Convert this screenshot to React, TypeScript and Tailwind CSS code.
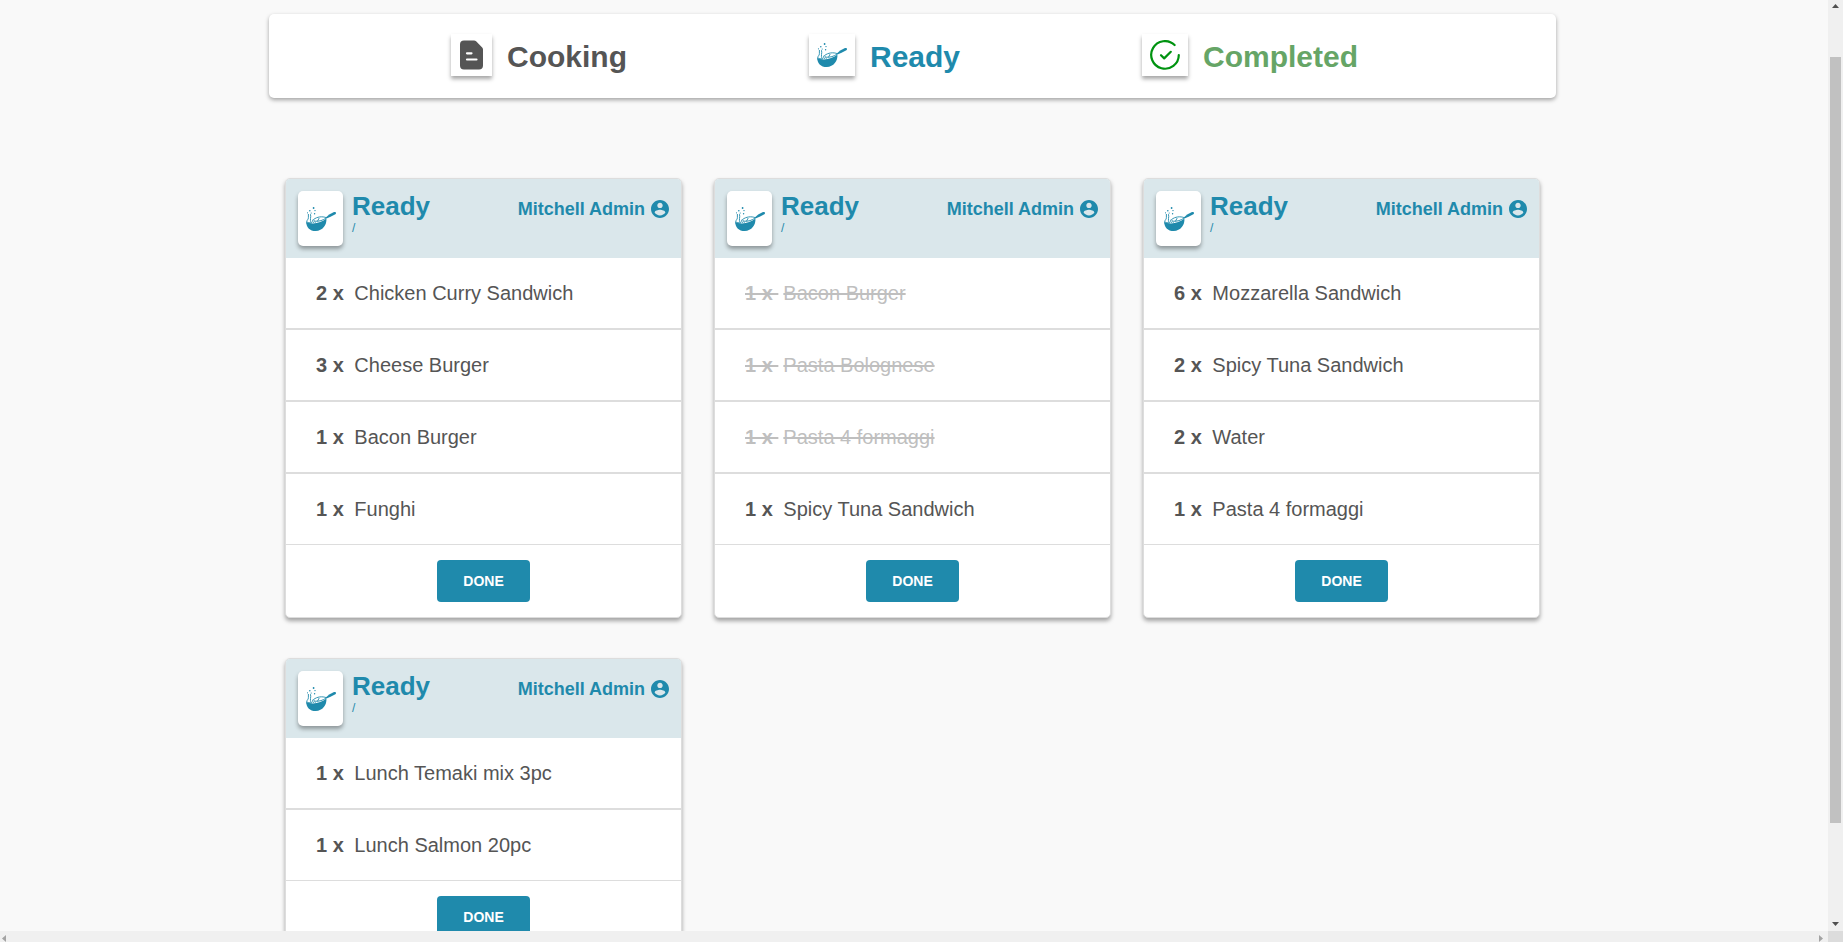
import type { ReactNode } from "react";

type Line = { qty: number; name: string; done?: boolean };
type Order = { id: number; user: string; lines: Line[] };

const orders: Order[] = [
  {
    id: 1,
    user: "Mitchell Admin",
    lines: [
      { qty: 2, name: "Chicken Curry Sandwich" },
      { qty: 3, name: "Cheese Burger" },
      { qty: 1, name: "Bacon Burger" },
      { qty: 1, name: "Funghi" },
    ],
  },
  {
    id: 2,
    user: "Mitchell Admin",
    lines: [
      { qty: 1, name: "Bacon Burger", done: true },
      { qty: 1, name: "Pasta Bolognese", done: true },
      { qty: 1, name: "Pasta 4 formaggi", done: true },
      { qty: 1, name: "Spicy Tuna Sandwich" },
    ],
  },
  {
    id: 3,
    user: "Mitchell Admin",
    lines: [
      { qty: 6, name: "Mozzarella Sandwich" },
      { qty: 2, name: "Spicy Tuna Sandwich" },
      { qty: 2, name: "Water" },
      { qty: 1, name: "Pasta 4 formaggi" },
    ],
  },
  {
    id: 4,
    user: "Mitchell Admin",
    lines: [
      { qty: 1, name: "Lunch Temaki mix 3pc" },
      { qty: 1, name: "Lunch Salmon 20pc" },
    ],
  },
];

function PanIcon() {
  return (
    <svg viewBox="0 0 30 30" className="size-[30px]" fill="#1f8aac" aria-hidden="true">
      <path d="M0.2 17.4C3.6 20.8 15 19.8 20.4 14.6C21 21 16.6 27 9.8 27C3.8 27 0 23 0.2 17.4Z" />
      <path d="M19.8 13.6L23.2 10.6L28 8.1C29.6 7.4 30.8 9.2 29.4 10.2L24.6 12.8L20.4 14.4Z" />
      <path
        d="M0.8 18C0.8 15 2.4 16.4 2.4 13.4V10.4M5 18.4C3.4 16 5.4 13 4.6 10.6M7.4 18.6C5.6 16.4 6.8 14.4 8.4 16.6L9.2 18.4M1.2 19.4C3 17 4.4 20 6 18.6M8 15.2C11 12.8 16 12 20.2 13.6M9.6 17.2C13 17.6 17 16.4 20.2 14M13 14.4L11.6 17"
        fill="none"
        stroke="#1f8aac"
        strokeWidth="0.9"
        strokeLinecap="round"
      />
      <circle cx="7.6" cy="4" r="0.9" />
      <circle cx="3.8" cy="6.8" r="0.8" />
      <circle cx="9" cy="6.6" r="0.7" />
      <circle cx="5.2" cy="9" r="0.6" />
      <circle cx="8.6" cy="9.8" r="0.7" />
      <circle cx="1.5" cy="8.8" r="0.6" />
    </svg>
  );
}

function TicketIcon() {
  return (
    <svg viewBox="0 0 24 30" className="h-[30px] w-[25px]" fill="none" aria-hidden="true">
      <path
        d="M4.5 0.5H14.5C15.4 0.5 16 0.7 16.6 1.3L22.7 7.4C23.3 8 23.5 8.6 23.5 9.5V25.5C23.5 28.1 22.1 29.5 19.5 29.5H4.5C1.9 29.5 0.5 28.1 0.5 25.5V4.5C0.5 1.9 1.9 0.5 4.5 0.5Z"
        fill="#555"
      />
      <path d="M7.5 13.3H12M7.5 19.5H17" stroke="#fff" strokeWidth="2.2" strokeLinecap="round" />
    </svg>
  );
}

function CompletedIcon() {
  return (
    <svg
      viewBox="0 0 30 30"
      className="size-[30px]"
      fill="none"
      stroke="#009310"
      strokeWidth="2.2"
      strokeLinecap="round"
      strokeLinejoin="round"
      aria-hidden="true"
    >
      <path d="M24.6 5A13.8 13.8 0 1 0 28.8 15" />
      <path d="M11 15.2L14.2 18.4L20.8 11.8" />
    </svg>
  );
}

function UserIcon() {
  return (
    <svg viewBox="2 2 20 20" className="size-[18px]" fill="#1f8aac" aria-hidden="true">
      <path d="M12 2C6.48 2 2 6.48 2 12s4.48 10 10 10 10-4.48 10-10S17.52 2 12 2zm0 3c1.66 0 3 1.34 3 3s-1.34 3-3 3-3-1.34-3-3 1.34-3 3-3zm0 14.2c-2.5 0-4.71-1.28-6-3.22.03-1.99 4-3.08 6-3.08 1.99 0 5.97 1.09 6 3.08-1.29 1.94-3.5 3.22-6 3.22z" />
    </svg>
  );
}

function StageTab({ icon, label, color }: { icon: ReactNode; label: string; color: string }) {
  return (
    <button type="button" className="flex items-start gap-[15px]">
      <span className="flex h-[42px] items-center bg-white px-2 shadow-[0_3px_4px_rgba(0,0,0,0.35)]">{icon}</span>
      <span className={`text-[30px] leading-[46px] font-bold ${color}`}>{label}</span>
    </button>
  );
}

function OrderCard({ order }: { order: Order }) {
  return (
    <article className="overflow-hidden rounded-[5px] border border-[#ddd] bg-white shadow-[0_3px_4px_rgba(0,0,0,0.35)]">
      <header className="flex items-start gap-[9px] bg-[#dae7eb] p-3 text-[#1f8aac]">
        <span className="flex h-[55px] w-[45px] shrink-0 items-center justify-center rounded-[5px] bg-white shadow-[0_3px_4px_rgba(0,0,0,0.35)]">
          <PanIcon />
        </span>
        <div className="flex-1">
          <h2 className="text-[26px] leading-[30px] font-bold">Ready</h2>
          <p className="text-xs leading-[14px]">/</p>
        </div>
        <p className="flex items-center gap-[6px] pt-2 text-lg leading-5 font-bold">
          {order.user}
          <UserIcon />
        </p>
      </header>
      <ul className="divide-y-2 divide-[#ddd]">
        {order.lines.map((line) => (
          <li key={line.name}>
            <button
              type="button"
              className={`flex w-full items-center gap-[5px] px-[30px] py-5 text-xl leading-[30px] whitespace-pre ${
                line.done ? "text-[#bfbfbf]" : "text-[#555]"
              }`}
            >
              <span className={line.done ? "font-bold line-through" : "font-bold"}>{`${line.qty} x `}</span>
              <span className={line.done ? "line-through" : ""}>{line.name}</span>
            </button>
          </li>
        ))}
      </ul>
      <footer className="flex justify-center border-t border-[#ddd] py-[15px]">
        <button type="button" className="rounded bg-[#1f8aac] px-[26px] py-[11px] text-sm leading-5 font-bold text-white">
          DONE
        </button>
      </footer>
    </article>
  );
}

function VerticalScrollbar() {
  return (
    <div className="flex w-[15px] shrink-0 flex-col items-center bg-[#f0f0f0] pt-1 pb-[5px]" aria-hidden="true">
      <svg viewBox="0 0 7 4" className="h-1 w-[7px]" fill="#505050">
        <path d="M3.5 0L7 4H0Z" />
      </svg>
      <div className="flex w-full flex-1 flex-col items-center pt-[49px] pb-[99px]">
        <div className="w-[11px] flex-1 bg-[#c1c1c1]" />
      </div>
      <svg viewBox="0 0 7 4" className="h-1 w-[7px]" fill="#505050">
        <path d="M3.5 4L0 0H7Z" />
      </svg>
    </div>
  );
}

function HorizontalScrollbar() {
  return (
    <div className="flex h-[11px] shrink-0 bg-[#f0f0f0]" aria-hidden="true">
      <div className="flex flex-1 items-end justify-between pr-[5px] pl-[2px]">
        <svg viewBox="0 0 4 7" className="h-[7px] w-1" fill="#a3a3a3">
          <path d="M0 3.5L4 0V7Z" />
        </svg>
        <svg viewBox="0 0 4 7" className="h-[7px] w-1" fill="#a3a3a3">
          <path d="M4 3.5L0 0V7Z" />
        </svg>
      </div>
      <div className="w-[15px] bg-[#dcdcdc]" />
    </div>
  );
}

export default function App() {
  return (
    <div className="flex h-screen flex-col overflow-hidden bg-[#f9f9f9] font-['Liberation_Sans',Arial,sans-serif] text-[#555]">
      <div className="flex min-h-0 flex-1">
        <main className="min-w-0 flex-1 overflow-hidden pt-[14px] pr-[3px]">
          <div className="mx-auto max-w-[1287px]">
            <nav className="flex items-center justify-evenly rounded-[5px] bg-white pt-5 pr-4 pb-[18px] shadow-[0_2px_4px_rgba(0,0,0,0.35)]">
              <StageTab icon={<TicketIcon />} label="Cooking" color="text-[#555]" />
              <StageTab icon={<PanIcon />} label="Ready" color="text-[#1f8aac]" />
              <StageTab icon={<CompletedIcon />} label="Completed" color="text-[#66a566]" />
            </nav>
            <section className="mt-20 grid grid-cols-1 items-start gap-x-8 gap-y-10 px-4 md:grid-cols-2 lg:grid-cols-3">
              {orders.map((order) => (
                <OrderCard key={order.id} order={order} />
              ))}
            </section>
          </div>
        </main>
        <VerticalScrollbar />
      </div>
      <HorizontalScrollbar />
    </div>
  );
}
